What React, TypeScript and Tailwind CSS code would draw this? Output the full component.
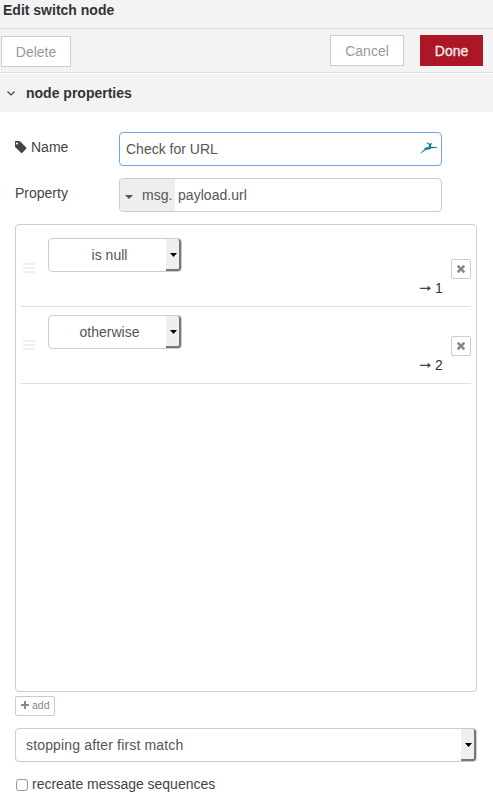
import React from "react";

function TagIcon() {
  return (
    <svg className="-mt-px h-3 w-3 shrink-0" viewBox="0 128 1515 1515" fill="#444">
      <path d="M384 448q0-53-37.5-90.5t-90.5-37.5-90.5 37.5-37.5 90.5 37.5 90.5 90.5 37.5 90.5-37.5 37.5-90.5zm1067 576q0 53-37 90l-491 492q-39 37-91 37-53 0-90-37l-715-716q-38-37-64.5-101t-26.5-117v-416q0-52 38-90t90-38h416q53 0 117 26.5t102 64.5l715 714q37 39 37 91z" />
    </svg>
  );
}

function TimesIcon() {
  return (
    <svg className="h-2 w-2" viewBox="302 366 1188 1188" fill="#888">
      <path d="M1490 1322q0 40-28 68l-136 136q-28 28-68 28t-68-28l-294-294-294 294q-28 28-68 28t-68-28l-136-136q-28-28-28-68t28-68l294-294-294-294q-28-28-28-68t28-68l136-136q28-28 68-28t68 28l294 294 294-294q28-28 68-28t68 28l136 136q28 28 28 68t-28 68l-294 294 294 294q28 28 28 68z" />
    </svg>
  );
}

function PlusIcon() {
  return (
    <svg className="mb-0.5 h-2 w-2" viewBox="0 0 8 8" fill="#888">
      <path d="M3 .4Q3 0 3.4 0H4.6Q5 0 5 .4V3H7.6Q8 3 8 3.4V4.6Q8 5 7.6 5H5V7.6Q5 8 4.6 8H3.4Q3 8 3 7.6V5H.4Q0 5 0 4.6V3.4Q0 3 .4 3H3Z" />
    </svg>
  );
}

function BirdIcon() {
  return (
    <svg className="h-3 w-[18px]" viewBox="0 0 18 12">
      <path
        d="M0.3 11.6L2.6 9L4.7 7.2L4.5 6L8.8 5L9.2 2.8L6.8 1.2L7 .6L9.5 1.7L12 1.3L11.8 2.2L10.9 2.8L11 4.9L17 5L17 5.8L11.5 6.2L9.5 7.3L6 7.7L3.4 9.4Z"
        fill="#0b7f96"
        stroke="#0b7f96"
        strokeWidth=".2"
      />
    </svg>
  );
}

function SelectArrow() {
  return (
    <span className="flex h-full w-[15px] items-center justify-center rounded-r-[3px] border-r-2 border-b-2 border-[#777] bg-[#efefef]">
      <svg className="mt-px ml-0.5 h-1 w-[7px]" viewBox="0 0 7 4" fill="#000">
        <path d="M0 0H7L3.5 4Z" />
      </svg>
    </span>
  );
}

function Rule({ label, index }: { label: string; index: number }) {
  return (
    <div className="flex h-[77px] border-b border-[#ddd]">
      <div className="mt-[33px] ml-0.5 flex w-3 flex-col gap-0.5">
        <span className="h-0.5 bg-[#eee]" />
        <span className="h-0.5 bg-[#eee]" />
        <span className="h-0.5 bg-[#eee]" />
      </div>
      <div className="mt-2 ml-[13px] flex h-[34px] w-[134px] rounded border border-[#ccc]">
        <span className="flex-1 pl-1 text-center leading-8">{label}</span>
        <SelectArrow />
      </div>
      <div className="mt-[48px] ml-auto flex h-5 w-[27px] leading-5 text-[#333]">
        <span className="-mt-[2px] w-[18px] text-[17px] [-webkit-text-stroke:0.3px_#333]">→</span>
        <span>{index}</span>
      </div>
      <button className="mt-[29px] ml-[7px] flex h-5 w-5 items-center justify-center rounded-[2px] border border-[#ccc]">
        <TimesIcon />
      </button>
    </div>
  );
}

export default function App() {
  return (
    <div className="h-[800px] w-[493px] overflow-hidden bg-white font-['Liberation_Sans',Arial,sans-serif] text-[14px] text-[#555]">
      <header className="h-[29px] border-b border-[#ddd] bg-[#f3f3f3] pl-[3px] leading-5 font-bold text-[#333]">
        Edit switch node
      </header>
      <div className="flex h-11 border-b border-[#ddd] bg-[#f3f3f3] pt-1.5 pl-px">
        <button className="mt-px h-[31px] w-[70px] border border-[#ccc] bg-white pt-0.5 text-[#999]">Delete</button>
        <button className="ml-auto h-[31px] w-[74px] border border-[#ccc] bg-white pt-0.5 text-[#999]">Cancel</button>
        <button className="mr-2.5 ml-4 h-[31px] w-[63px] bg-[#ad1625] pt-0.5 text-[#eee] [-webkit-text-stroke:0.3px_#eee]">
          Done
        </button>
      </div>
      <div className="mt-px flex h-[38px] items-center bg-[#f3f3f3] pl-[7px] font-bold text-[#333]">
        <svg className="mr-[11px] h-[5px] w-2" viewBox="0 0 8 5" fill="none" stroke="#444" strokeWidth="1.2">
          <path d="M.5 .5L4 4L7.5 .5" />
        </svg>
        node properties
      </div>

      <main className="pt-5 pr-4 pl-[15px]">
        <div className="flex">
          <label className="flex h-[30px] w-[104px] items-center gap-1 text-[#444]">
            <TagIcon />
            Name
          </label>
          <div className="flex h-[34px] w-[323px] items-center justify-between rounded border border-[#6ca5ec] pr-[3px] pl-1.5">
            <span>Check for URL</span>
            <span className="pb-0.5">
              <BirdIcon />
            </span>
          </div>
        </div>
        <div className="mt-3 flex">
          <label className="flex h-[30px] w-[104px] items-center text-[#444]">Property</label>
          <div className="flex h-[34px] w-[323px] overflow-hidden rounded border border-[#ccc] leading-8">
            <span className="flex w-[55px] items-center bg-[#eee] pl-[5px]">
              <svg className="mt-1 mr-[9px] h-1 w-2" viewBox="0 0 8 4" fill="#555">
                <path d="M0 0H8L4 4Z" />
              </svg>
              msg.
            </span>
            <span className="pl-[3px] tracking-[0.04px]">payload.url</span>
          </div>
        </div>

        <div className="mt-3 h-[468px] w-[462px] rounded border border-[#ccc] px-[5px] pt-[5px]">
          <Rule label="is null" index={1} />
          <Rule label="otherwise" index={2} />
        </div>

        <button className="mt-1 flex h-5 w-10 items-center gap-[3px] rounded-[2px] border border-[#ccc] pl-[5px] text-[10.5px] text-[#888]">
          <PlusIcon />
          add
        </button>

        <div className="mt-3 flex h-[34px] w-[462px] rounded border border-[#ccc]">
          <span className="flex-1 pl-2.5 leading-8 tracking-[0.16px]">stopping after first match</span>
          <SelectArrow />
        </div>

        <label className="mt-3 flex h-5 items-center text-[#444]">
          <span className="mt-px mr-1 ml-px h-3 w-3 rounded-[3px] border border-[#999]" />
          <span className="tracking-[-0.02px]">recreate message sequences</span>
        </label>
      </main>
    </div>
  );
}
